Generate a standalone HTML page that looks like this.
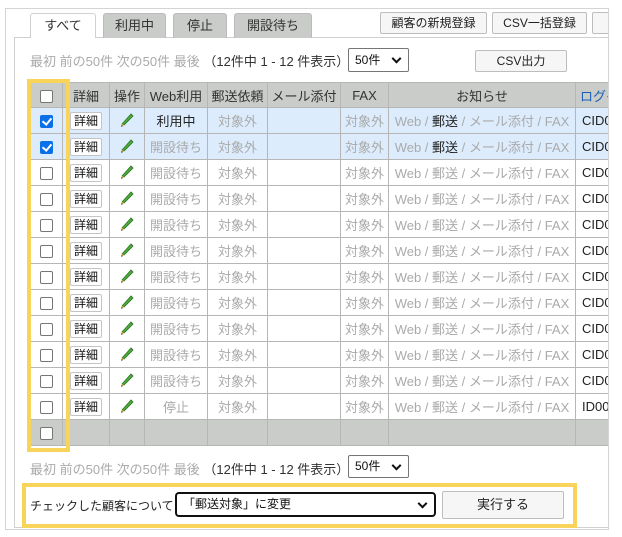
<!DOCTYPE html>
<html><head><meta charset="utf-8"><style>
*{box-sizing:border-box;margin:0;padding:0}
body{width:622px;height:537px;background:#fff;font-family:"Liberation Sans","Noto Sans CJK JP",sans-serif;font-size:13px;color:#222;position:relative;overflow:hidden}
.a{position:absolute}
.outer{left:5px;top:8px;width:640px;height:522px;border:1px solid #d4d4d4;background:#fff}
.inner{left:14px;top:37px;width:640px;height:491px;border:1px solid #d0d0d0;background:#fff}
.tab{top:13px;height:25px;background:#c9ccc9;border:1px solid #bbb;border-bottom:none;border-radius:3px 3px 0 0;text-align:center;line-height:24px;color:#333;font-size:13px}
.tab.on{background:#fff;border-color:#d0d0d0;height:25px;z-index:2}
.btn{background:#f6f6f6;border:1px solid #bdbdbd;border-radius:2px;text-align:center;font-size:12px;color:#222}
.pg{font-size:13px;color:#aaa}
.pg b{font-weight:normal;color:#333}
.sel{background:#fff;border:1px solid #767676;border-radius:2px;font-size:12px;padding-left:6px;color:#111}
.sel:after{content:"";position:absolute;right:8px;top:50%;width:5px;height:5px;border-right:2px solid #111;border-bottom:2px solid #111;transform:translateY(-70%) rotate(45deg)}
table{position:absolute;left:30px;top:82px;border-collapse:collapse;table-layout:fixed;width:620px}
td,th{border:1px solid #b6b6b6;height:26px;text-align:center;font-weight:normal;white-space:nowrap;overflow:hidden;color:#aaa;font-size:13px;padding:0}
th{background:#c9ccc9;color:#333;height:25px}
tr.s td{background:#dcecfc}
td.k{color:#222;text-align:left;padding-left:6px}
.d{display:inline-block;border:1px solid #c4c4c4;background:#fff;color:#111;font-size:12px;line-height:16px;padding:0 3px;border-radius:2px}
.cb{display:inline-block;width:13px;height:13px;border:1px solid #767676;border-radius:2px;background:#fff;vertical-align:middle}
.cb.c{background:#0a70e8;border-color:#0a70e8;position:relative}
.cb.c:after{content:"";position:absolute;left:3px;top:0px;width:4px;height:7px;border-right:2px solid #fff;border-bottom:2px solid #fff;transform:rotate(40deg)}
tr.f td{background:#c9ccc9}
.ylw{border:4px solid #f8d45a}
</style></head><body>
<div class="a outer"></div>
<div class="a inner"></div>
<div class="a tab on" style="left:30px;width:66px">すべて</div>
<div class="a tab" style="left:103px;width:63px">利用中</div>
<div class="a tab" style="left:173px;width:54px">停止</div>
<div class="a tab" style="left:234px;width:78px">開設待ち</div>
<div class="a btn" style="left:380px;top:12px;width:107px;height:22px;line-height:20px">顧客の新規登録</div>
<div class="a btn" style="left:492px;top:12px;width:95px;height:22px;line-height:20px">CSV一括登録</div>
<div class="a btn" style="left:592px;top:12px;width:40px;height:22px"></div>
<div class="a pg" style="left:30px;top:51px">最初 前の50件 次の50件 最後 <b>（12件中 1 - 12 件表示）</b></div>
<div class="a sel" style="left:348px;top:48px;width:61px;height:24px;line-height:22px">50件</div>
<div class="a btn" style="left:475px;top:50px;width:92px;height:22px;line-height:20px">CSV出力</div>
<table>
<colgroup><col style="width:32px"><col style="width:47px"><col style="width:35px"><col style="width:63px"><col style="width:60px"><col style="width:73px"><col style="width:48px"><col style="width:187px"><col style="width:75px"></colgroup>
<tr><th><span class="cb"></span></th><th>詳細</th><th>操作</th><th>Web利用</th><th>郵送依頼</th><th>メール添付</th><th>FAX</th><th>お知らせ</th><th style="color:#1a5fb4;text-align:left;padding-left:4px">ログイン</th></tr>
<tr class="s"><td><span class="cb c"></span></td><td><span class="d">詳細</span></td><td><svg width="16" height="16" viewBox="0 0 16 16"><path d="M3 13 L12 3 L14 5 L5 14 Z" fill="#4caf3c" stroke="#2b6e22" stroke-width="0.8"/><path d="M3 13 L5 14 L2.5 15.5 Z" fill="#f0b040"/><path d="M2.5 15.5 L3.2 14.4" stroke="#222" stroke-width="1.2"/></svg></td><td style="color:#222">利用中</td><td>対象外</td><td></td><td>対象外</td><td>Web / <span style="color:#222">郵送</span> / メール添付 / FAX</td><td class="k">CID00</td></tr>
<tr class="s"><td><span class="cb c"></span></td><td><span class="d">詳細</span></td><td><svg width="16" height="16" viewBox="0 0 16 16"><path d="M3 13 L12 3 L14 5 L5 14 Z" fill="#4caf3c" stroke="#2b6e22" stroke-width="0.8"/><path d="M3 13 L5 14 L2.5 15.5 Z" fill="#f0b040"/><path d="M2.5 15.5 L3.2 14.4" stroke="#222" stroke-width="1.2"/></svg></td><td>開設待ち</td><td>対象外</td><td></td><td>対象外</td><td>Web / <span style="color:#222">郵送</span> / メール添付 / FAX</td><td class="k">CID00</td></tr>
<tr><td><span class="cb"></span></td><td><span class="d">詳細</span></td><td><svg width="16" height="16" viewBox="0 0 16 16"><path d="M3 13 L12 3 L14 5 L5 14 Z" fill="#4caf3c" stroke="#2b6e22" stroke-width="0.8"/><path d="M3 13 L5 14 L2.5 15.5 Z" fill="#f0b040"/><path d="M2.5 15.5 L3.2 14.4" stroke="#222" stroke-width="1.2"/></svg></td><td>開設待ち</td><td>対象外</td><td></td><td>対象外</td><td>Web / 郵送 / メール添付 / FAX</td><td class="k">CID00</td></tr>
<tr><td><span class="cb"></span></td><td><span class="d">詳細</span></td><td><svg width="16" height="16" viewBox="0 0 16 16"><path d="M3 13 L12 3 L14 5 L5 14 Z" fill="#4caf3c" stroke="#2b6e22" stroke-width="0.8"/><path d="M3 13 L5 14 L2.5 15.5 Z" fill="#f0b040"/><path d="M2.5 15.5 L3.2 14.4" stroke="#222" stroke-width="1.2"/></svg></td><td>開設待ち</td><td>対象外</td><td></td><td>対象外</td><td>Web / 郵送 / メール添付 / FAX</td><td class="k">CID00</td></tr>
<tr><td><span class="cb"></span></td><td><span class="d">詳細</span></td><td><svg width="16" height="16" viewBox="0 0 16 16"><path d="M3 13 L12 3 L14 5 L5 14 Z" fill="#4caf3c" stroke="#2b6e22" stroke-width="0.8"/><path d="M3 13 L5 14 L2.5 15.5 Z" fill="#f0b040"/><path d="M2.5 15.5 L3.2 14.4" stroke="#222" stroke-width="1.2"/></svg></td><td>開設待ち</td><td>対象外</td><td></td><td>対象外</td><td>Web / 郵送 / メール添付 / FAX</td><td class="k">CID00</td></tr>
<tr><td><span class="cb"></span></td><td><span class="d">詳細</span></td><td><svg width="16" height="16" viewBox="0 0 16 16"><path d="M3 13 L12 3 L14 5 L5 14 Z" fill="#4caf3c" stroke="#2b6e22" stroke-width="0.8"/><path d="M3 13 L5 14 L2.5 15.5 Z" fill="#f0b040"/><path d="M2.5 15.5 L3.2 14.4" stroke="#222" stroke-width="1.2"/></svg></td><td>開設待ち</td><td>対象外</td><td></td><td>対象外</td><td>Web / 郵送 / メール添付 / FAX</td><td class="k">CID00</td></tr>
<tr><td><span class="cb"></span></td><td><span class="d">詳細</span></td><td><svg width="16" height="16" viewBox="0 0 16 16"><path d="M3 13 L12 3 L14 5 L5 14 Z" fill="#4caf3c" stroke="#2b6e22" stroke-width="0.8"/><path d="M3 13 L5 14 L2.5 15.5 Z" fill="#f0b040"/><path d="M2.5 15.5 L3.2 14.4" stroke="#222" stroke-width="1.2"/></svg></td><td>開設待ち</td><td>対象外</td><td></td><td>対象外</td><td>Web / 郵送 / メール添付 / FAX</td><td class="k">CID00</td></tr>
<tr><td><span class="cb"></span></td><td><span class="d">詳細</span></td><td><svg width="16" height="16" viewBox="0 0 16 16"><path d="M3 13 L12 3 L14 5 L5 14 Z" fill="#4caf3c" stroke="#2b6e22" stroke-width="0.8"/><path d="M3 13 L5 14 L2.5 15.5 Z" fill="#f0b040"/><path d="M2.5 15.5 L3.2 14.4" stroke="#222" stroke-width="1.2"/></svg></td><td>開設待ち</td><td>対象外</td><td></td><td>対象外</td><td>Web / 郵送 / メール添付 / FAX</td><td class="k">CID00</td></tr>
<tr><td><span class="cb"></span></td><td><span class="d">詳細</span></td><td><svg width="16" height="16" viewBox="0 0 16 16"><path d="M3 13 L12 3 L14 5 L5 14 Z" fill="#4caf3c" stroke="#2b6e22" stroke-width="0.8"/><path d="M3 13 L5 14 L2.5 15.5 Z" fill="#f0b040"/><path d="M2.5 15.5 L3.2 14.4" stroke="#222" stroke-width="1.2"/></svg></td><td>開設待ち</td><td>対象外</td><td></td><td>対象外</td><td>Web / 郵送 / メール添付 / FAX</td><td class="k">CID00</td></tr>
<tr><td><span class="cb"></span></td><td><span class="d">詳細</span></td><td><svg width="16" height="16" viewBox="0 0 16 16"><path d="M3 13 L12 3 L14 5 L5 14 Z" fill="#4caf3c" stroke="#2b6e22" stroke-width="0.8"/><path d="M3 13 L5 14 L2.5 15.5 Z" fill="#f0b040"/><path d="M2.5 15.5 L3.2 14.4" stroke="#222" stroke-width="1.2"/></svg></td><td>開設待ち</td><td>対象外</td><td></td><td>対象外</td><td>Web / 郵送 / メール添付 / FAX</td><td class="k">CID00</td></tr>
<tr><td><span class="cb"></span></td><td><span class="d">詳細</span></td><td><svg width="16" height="16" viewBox="0 0 16 16"><path d="M3 13 L12 3 L14 5 L5 14 Z" fill="#4caf3c" stroke="#2b6e22" stroke-width="0.8"/><path d="M3 13 L5 14 L2.5 15.5 Z" fill="#f0b040"/><path d="M2.5 15.5 L3.2 14.4" stroke="#222" stroke-width="1.2"/></svg></td><td>開設待ち</td><td>対象外</td><td></td><td>対象外</td><td>Web / 郵送 / メール添付 / FAX</td><td class="k">CID00</td></tr>
<tr><td><span class="cb"></span></td><td><span class="d">詳細</span></td><td><svg width="16" height="16" viewBox="0 0 16 16"><path d="M3 13 L12 3 L14 5 L5 14 Z" fill="#4caf3c" stroke="#2b6e22" stroke-width="0.8"/><path d="M3 13 L5 14 L2.5 15.5 Z" fill="#f0b040"/><path d="M2.5 15.5 L3.2 14.4" stroke="#222" stroke-width="1.2"/></svg></td><td>停止</td><td>対象外</td><td></td><td>対象外</td><td>Web / 郵送 / メール添付 / FAX</td><td class="k">ID000</td></tr>
<tr class="f"><td><span class="cb"></span></td><td></td><td></td><td></td><td></td><td></td><td></td><td></td><td></td></tr>
</table>
<div class="a ylw" style="left:27px;top:79px;width:43px;height:373px"></div>
<div class="a" style="left:609px;top:0;width:13px;height:537px;background:#fff"></div>
<div class="a" style="left:608px;top:8px;width:1px;height:522px;background:#d4d4d4"></div>
<div class="a pg" style="left:30px;top:459px">最初 前の50件 次の50件 最後 <b>（12件中 1 - 12 件表示）</b></div>
<div class="a sel" style="left:348px;top:455px;width:61px;height:23px;line-height:21px">50件</div>
<div class="a ylw" style="left:22px;top:483px;width:555px;height:45px"></div>
<div class="a" style="left:30px;top:497px;font-size:12px;color:#222">チェックした顧客について</div>
<div class="a sel" style="left:175px;top:492px;width:261px;height:25px;line-height:21px;border:2px solid #111;border-radius:4px">「郵送対象」に変更</div>
<div class="a btn" style="left:442px;top:491px;width:122px;height:28px;line-height:26px;font-size:13px">実行する</div>
</body></html>
